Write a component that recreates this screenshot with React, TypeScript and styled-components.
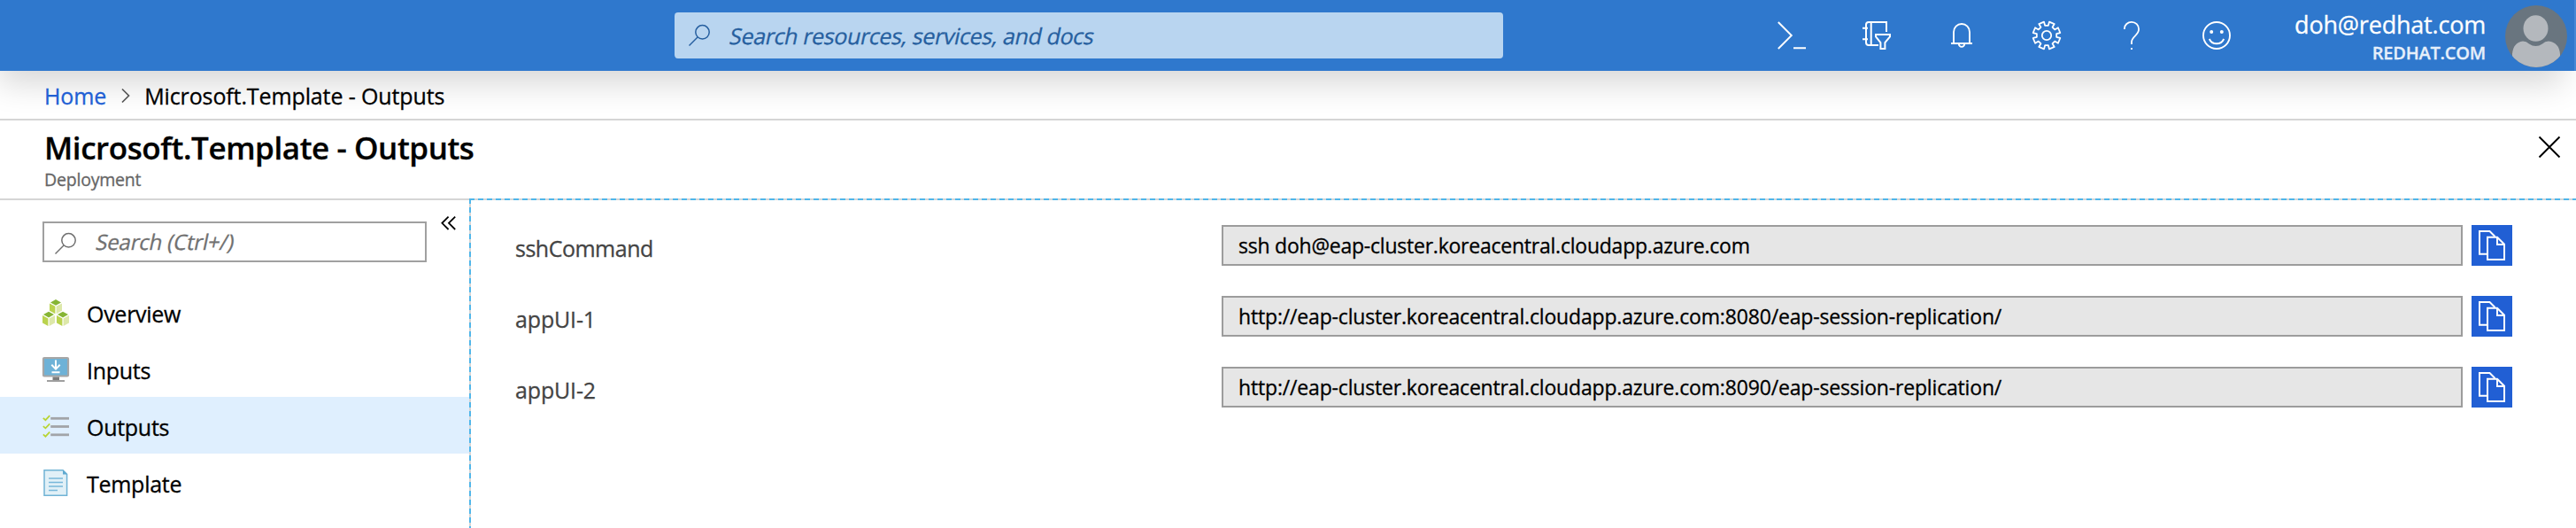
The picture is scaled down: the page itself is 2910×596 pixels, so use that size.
import React from 'react';
import styled, { createGlobalStyle } from 'styled-components';

const GlobalStyle = createGlobalStyle`
  *, *::before, *::after { box-sizing: border-box; }
  html, body { margin: 0; height: 596px; overflow: hidden; background: #fff; }
  body {
    font-family: 'Open Sans', 'Noto Sans', sans-serif;
    font-size: 25px;
    line-height: 34px;
    color: #000;
    -webkit-font-smoothing: antialiased;
    -webkit-text-stroke: 0.3px currentColor;
  }
  svg { display: block; flex: none; overflow: visible; }
  button { border: 0; padding: 0; background: none; font: inherit; color: inherit; }
`;

const Page = styled.div`
  height: 596px;
  display: flex;
  flex-direction: column;
  overflow: hidden;
`;

/* Top bar */

const TopBar = styled.header`
  flex: none;
  height: 80px;
  display: flex;
  align-items: center;
  padding: 0 8px 0 762px;
  background: #2f78cd;
  border-right: 2px solid #4588d6;
  box-shadow: -8px 20px 36px -6px rgba(0, 0, 0, 0.16);
`;

const GlobalSearch = styled.div`
  width: 936px;
  height: 52px;
  display: flex;
  align-items: center;
  gap: 23px;
  padding-left: 16px;
  border-radius: 4px;
  background: #b9d5f0;
  color: #265f9f;
`;

const Slanted = styled.span<{ $size: number; $tracking: number }>`
  display: inline-block;
  white-space: pre;
  transform: skewX(-12deg);
  font-size: ${(p) => p.$size}px;
  letter-spacing: ${(p) => p.$tracking}px;
`;

const ToolGroup = styled.nav`
  display: flex;
  margin-left: auto;
  color: #fff;
`;

const ToolButton = styled.button`
  width: 96px;
  height: 80px;
  display: flex;
  align-items: center;
  justify-content: center;
`;

const Account = styled.div`
  width: 256px;
  height: 80px;
  padding-top: 10px;
  display: flex;
  flex-direction: column;
  align-items: flex-end;
  color: #fff;
`;

const AccountName = styled.span`
  font-size: 27px;
  line-height: 36px;
  letter-spacing: -0.2px;
`;

const AccountTenant = styled.span`
  font-size: 20px;
  line-height: 28px;
  font-weight: 600;
  letter-spacing: -0.22px;
  color: #e6effa;
`;

const Avatar = styled.div`
  width: 70px;
  height: 70px;
  margin: 2px 0 0 22px;
  border-radius: 50%;
  overflow: hidden;
  background: #69757f;
`;

/* Breadcrumb and blade title */

const Breadcrumb = styled.div`
  flex: none;
  height: 56px;
  display: flex;
  align-items: center;
  padding: 2px 0 0 50px;
  border-bottom: 2px solid #d5d5d5;
  letter-spacing: -0.12px;

  svg { margin: 0 16px 0 17px; }
`;

const HomeLink = styled.a`
  color: #215fd4;
`;

const TitleBar = styled.div`
  flex: none;
  height: 88px;
  display: flex;
  justify-content: space-between;
  padding: 11px 18px 0 50px;
`;

const Title = styled.h1`
  margin: 0 0 4px;
  font-size: 35px;
  line-height: 40px;
  font-weight: 600;
  letter-spacing: -0.43px;
`;

const Subtitle = styled.div`
  font-size: 19.5px;
  line-height: 24px;
  letter-spacing: -0.2px;
  color: #666;
`;

const CloseButton = styled.button`
  width: 24px;
  height: 24px;
  margin-top: 7px;
`;

/* Body */

const Body = styled.div`
  flex: 1;
  display: flex;
  min-height: 0;
`;

const Sidebar = styled.aside`
  width: 530px;
  border-top: 2px solid #d5d5d5;
`;

const SidebarTop = styled.div`
  height: 94px;
  display: flex;
  align-items: flex-start;
  gap: 16px;
  padding: 24px 0 0 48px;
`;

const MenuSearch = styled.div`
  width: 434px;
  height: 46px;
  display: flex;
  align-items: center;
  gap: 23px;
  padding-left: 12px;
  border: 2px solid #a0a0a0;
  color: #707070;

  svg { margin-top: 4px; }
`;

const CollapseButton = styled.button`
  width: 18px;
  height: 16px;
  margin-top: -6px;
`;

const MenuItem = styled.div<{ $selected?: boolean }>`
  height: 64px;
  display: flex;
  align-items: center;
  gap: 20px;
  padding: 2px 0 0 48px;
  background: ${(p) => (p.$selected ? '#dfeffe' : 'transparent')};
  letter-spacing: -0.28px;

  span { padding-top: 2px; }
`;

const Content = styled.main`
  flex: 1;
  padding: 30px 72px 0 52px;
  background:
    repeating-linear-gradient(90deg, #4fb6ea 0 6px, #d5d5d5 6px 9.983px) 0 0 / 100% 2px no-repeat,
    repeating-linear-gradient(180deg, #4fb6ea 0 6px, #d5d5d5 6px 10px) 0 0 / 2px 100% no-repeat;
`;

const OutputList = styled.div`
  display: grid;
  gap: 34px;
`;

const OutputRow = styled.div`
  height: 46px;
  display: flex;
  align-items: center;
`;

const OutputLabel = styled.label<{ $tracking: number }>`
  width: 798px;
  padding-top: 6px;
  color: #444;
  letter-spacing: ${(p) => p.$tracking}px;
`;

const OutputValue = styled.div<{ $tracking: number }>`
  flex: 1;
  height: 46px;
  display: flex;
  align-items: center;
  padding-left: 17px;
  border: 2px solid #9c9c9c;
  background: #e6e6e6;
  font-size: 23px;
  letter-spacing: ${(p) => p.$tracking}px;
`;

const CopyButton = styled.button`
  width: 46px;
  height: 46px;
  margin-left: 10px;
  background: #215fd4;
`;

/* Icons */

const SearchIcon = () => (
  <svg width="24" height="24" viewBox="0 0 24 24" fill="none" stroke="currentColor" strokeWidth="1.5">
    <circle cx="15.5" cy="8.3" r="7.7" />
    <path d="M10 14 0.5 23.5" />
  </svg>
);

const TerminalIcon = () => (
  <svg width="32" height="32" viewBox="0 0 32 32" fill="none" stroke="currentColor" strokeWidth="1.9">
    <path d="M0.8 1 15.8 16 0.8 31M18 30.3H32" />
  </svg>
);

const DirectoryIcon = () => (
  <svg width="32" height="32" viewBox="0 0 32 32" fill="none" stroke="currentColor" strokeWidth="2">
    <path d="M27 12V1H7Q4 1 4 4V24Q4 27 7 27H18M9.7 1V27M0 7.7H6M0 20.3H6" />
    <path d="M15 15H31V17.3L25.4 24V31H20.4V24L15 17.3Z" />
  </svg>
);

const BellIcon = () => (
  <svg width="24" height="28" viewBox="0 0 24 28" fill="none" stroke="currentColor" strokeWidth="1.9">
    <path d="M0 23H24M3 23V10.2A9 9.2 0 0 1 21 10.2V23M8.8 23.6A3.2 3.3 0 0 0 15.2 23.6" />
  </svg>
);

/* Eight-toothed cog outline, built around the centre of a 32px box. */
const GEAR_PATH = (() => {
  const points: string[] = [];
  for (let i = 0; i < 8; i += 1) {
    const axis = i * 45 + 22.5;
    [
      [-13, 11.3],
      [-11.5, 15.6],
      [11.5, 15.6],
      [13, 11.3],
    ].forEach(([offset, radius]) => {
      const a = ((axis + offset) * Math.PI) / 180;
      points.push(`${(16 + radius * Math.cos(a)).toFixed(2)} ${(16 + radius * Math.sin(a)).toFixed(2)}`);
    });
  }
  return `M${points.join('L')}Z`;
})();

const GearIcon = () => (
  <svg width="32" height="32" viewBox="0 0 32 32" fill="none" stroke="currentColor" strokeWidth="1.8" strokeLinejoin="round">
    <path d={GEAR_PATH} />
    <circle cx="16" cy="16" r="5.2" />
  </svg>
);

const HelpIcon = () => (
  <svg width="18" height="32" viewBox="0 0 18 32" fill="none" stroke="currentColor" strokeWidth="1.8">
    <path d="M0.9 9V8.3A8 7.5 0 0 1 9 0.9A8 7.8 0 0 1 17.1 8.8C17.1 16 9 17 9 23.5V26M9 30V32" />
  </svg>
);

const SmileIcon = () => (
  <svg width="32" height="32" viewBox="0 0 32 32" fill="none" stroke="currentColor" strokeWidth="1.9">
    <circle cx="16" cy="16" r="15" />
    <circle cx="10.2" cy="12" r="2" fill="currentColor" stroke="none" />
    <circle cx="21.8" cy="12" r="2" fill="currentColor" stroke="none" />
    <path d="M7.8 20A9 9 0 0 0 24.2 20" />
  </svg>
);

const AvatarFigure = () => (
  <svg width="70" height="70" viewBox="0 0 70 70" fill="#b4b8bd">
    <path d="M8 70V55Q9 42 20 40.5Q24 40.5 27 43.5Q34.5 48.5 42 43.5Q45 40.5 49 40.5Q61 42 62 55V70Z" />
    <ellipse cx="34.5" cy="26" rx="14" ry="14.8" />
  </svg>
);

const ChevronIcon = () => (
  <svg width="10" height="16" viewBox="0 0 10 16" fill="none" stroke="#555" strokeWidth="1.7">
    <path d="M1 0.5 8.5 8 1 15.5" />
  </svg>
);

const CloseIcon = () => (
  <svg width="24" height="24" viewBox="0 0 24 24" fill="none" stroke="#000" strokeWidth="1.9">
    <path d="M0.5 0.5 23.5 23.5M23.5 0.5 0.5 23.5" />
  </svg>
);

const CollapseIcon = () => (
  <svg width="18" height="16" viewBox="0 0 18 16" fill="none" stroke="#000" strokeWidth="1.8">
    <path d="M8.6 0.6 1.4 7.8 8.6 15M16.2 0.6 9 7.8 16.2 15" />
  </svg>
);

const Cube = ({ x, y }: { x: number; y: number }) => (
  <g transform={`translate(${x} ${y})`}>
    <path fill="#86b534" d="M7 0 13 3.4 7 6.8 1 3.4Z" />
    <path fill="#bad34e" d="M0 4.4 6.4 7.8V16.2L0 12.8Z" />
    <path fill="#dde8a9" d="M7.6 7.8 14 4.4V12.8L7.6 16.2Z" />
  </g>
);

const OverviewIcon = () => (
  <svg width="30" height="30" viewBox="0 0 30 30">
    <Cube x={8} y={0} />
    <Cube x={0} y={13.7} />
    <Cube x={16} y={13.7} />
  </svg>
);

const InputsIcon = () => (
  <svg width="30" height="30" viewBox="0 0 30 30">
    <rect x="1" y="2" width="28" height="20.5" rx="1" fill="#6eb2d7" stroke="#a6a6a6" strokeWidth="2.2" />
    <path fill="#7b7b7b" d="M11.5 23.5H19V27.5H11.5Z" />
    <path fill="#9f9f9f" d="M5 27H25V29H5Z" />
    <path d="M15 4.5V14.5M10.3 9.8 15 14.6 19.7 9.8M10.5 18.3H19.5" fill="none" stroke="#fff" strokeWidth="2" />
  </svg>
);

const OutputsIcon = () => (
  <svg width="30" height="30" viewBox="0 0 30 30" fill="none">
    {[6.3, 15.5, 24.8].map((y) => (
      <g key={y}>
        <path d={`M9.2 ${y}H30`} stroke="#a2a4a8" strokeWidth="2.8" />
        <path d={`M0.8 ${y - 0.4}L3.4 ${y + 1.9}L8.2 ${y - 3.2}`} stroke="#b8d432" strokeWidth="1.7" />
      </g>
    ))}
  </svg>
);

const TemplateIcon = () => (
  <svg width="30" height="30" viewBox="0 0 30 30">
    <path d="M2 0.7H23L27.6 5.3V29.3H2Z" fill="#e1f0f7" stroke="#70b3d5" strokeWidth="1.5" />
    <path d="M23 0.4V5.4H28Z" fill="#5fa9d0" />
    <path d="M7 10H23M7 14.5H23M7 19H23M7 23.5H17" fill="none" stroke="#78b8da" strokeWidth="1.7" />
  </svg>
);

const CopyIcon = () => (
  <svg width="46" height="46" viewBox="0 0 46 46" fill="none" stroke="#fff" strokeWidth="2">
    <path d="M18 32.7H9V7H20.5L26.5 13" />
    <path d="M18 13.7H29L37 21.7V39H18ZM29 13.7V21.9H37" />
  </svg>
);

/* Data */

const TOOLS = [TerminalIcon, DirectoryIcon, BellIcon, GearIcon, HelpIcon, SmileIcon];

const MENU = [
  { label: 'Overview', Icon: OverviewIcon },
  { label: 'Inputs', Icon: InputsIcon },
  { label: 'Outputs', Icon: OutputsIcon, selected: true },
  { label: 'Template', Icon: TemplateIcon },
];

const OUTPUTS = [
  {
    name: 'sshCommand',
    nameTracking: -0.5,
    value: 'ssh doh@eap-cluster.koreacentral.cloudapp.azure.com',
    valueTracking: -0.23,
  },
  {
    name: 'appUI-1',
    nameTracking: -0.15,
    value: 'http://eap-cluster.koreacentral.cloudapp.azure.com:8080/eap-session-replication/',
    valueTracking: -0.17,
  },
  {
    name: 'appUI-2',
    nameTracking: -0.15,
    value: 'http://eap-cluster.koreacentral.cloudapp.azure.com:8090/eap-session-replication/',
    valueTracking: -0.17,
  },
];

export default function App() {
  return (
    <Page>
      <GlobalStyle />
      <TopBar>
        <GlobalSearch>
          <SearchIcon />
          <Slanted $size={25} $tracking={-0.37}>Search resources, services, and docs</Slanted>
        </GlobalSearch>
        <ToolGroup>
          {TOOLS.map((Icon, i) => (
            <ToolButton key={i}>
              <Icon />
            </ToolButton>
          ))}
        </ToolGroup>
        <Account>
          <AccountName>doh@redhat.com</AccountName>
          <AccountTenant>REDHAT.COM</AccountTenant>
        </Account>
        <Avatar>
          <AvatarFigure />
        </Avatar>
      </TopBar>

      <Breadcrumb>
        <HomeLink>Home</HomeLink>
        <ChevronIcon />
        <span>Microsoft.Template - Outputs</span>
      </Breadcrumb>

      <TitleBar>
        <div>
          <Title>Microsoft.Template - Outputs</Title>
          <Subtitle>Deployment</Subtitle>
        </div>
        <CloseButton aria-label="Close">
          <CloseIcon />
        </CloseButton>
      </TitleBar>

      <Body>
        <Sidebar>
          <SidebarTop>
            <MenuSearch>
              <SearchIcon />
              <Slanted $size={24} $tracking={-0.2}>Search (Ctrl+/)</Slanted>
            </MenuSearch>
            <CollapseButton aria-label="Collapse menu">
              <CollapseIcon />
            </CollapseButton>
          </SidebarTop>
          {MENU.map(({ label, Icon, selected }) => (
            <MenuItem key={label} $selected={selected}>
              <Icon />
              <span>{label}</span>
            </MenuItem>
          ))}
        </Sidebar>
        <Content>
          <OutputList>
            {OUTPUTS.map((o) => (
              <OutputRow key={o.name}>
                <OutputLabel $tracking={o.nameTracking}>{o.name}</OutputLabel>
                <OutputValue $tracking={o.valueTracking}>{o.value}</OutputValue>
                <CopyButton aria-label="Copy">
                  <CopyIcon />
                </CopyButton>
              </OutputRow>
            ))}
          </OutputList>
        </Content>
      </Body>
    </Page>
  );
}
